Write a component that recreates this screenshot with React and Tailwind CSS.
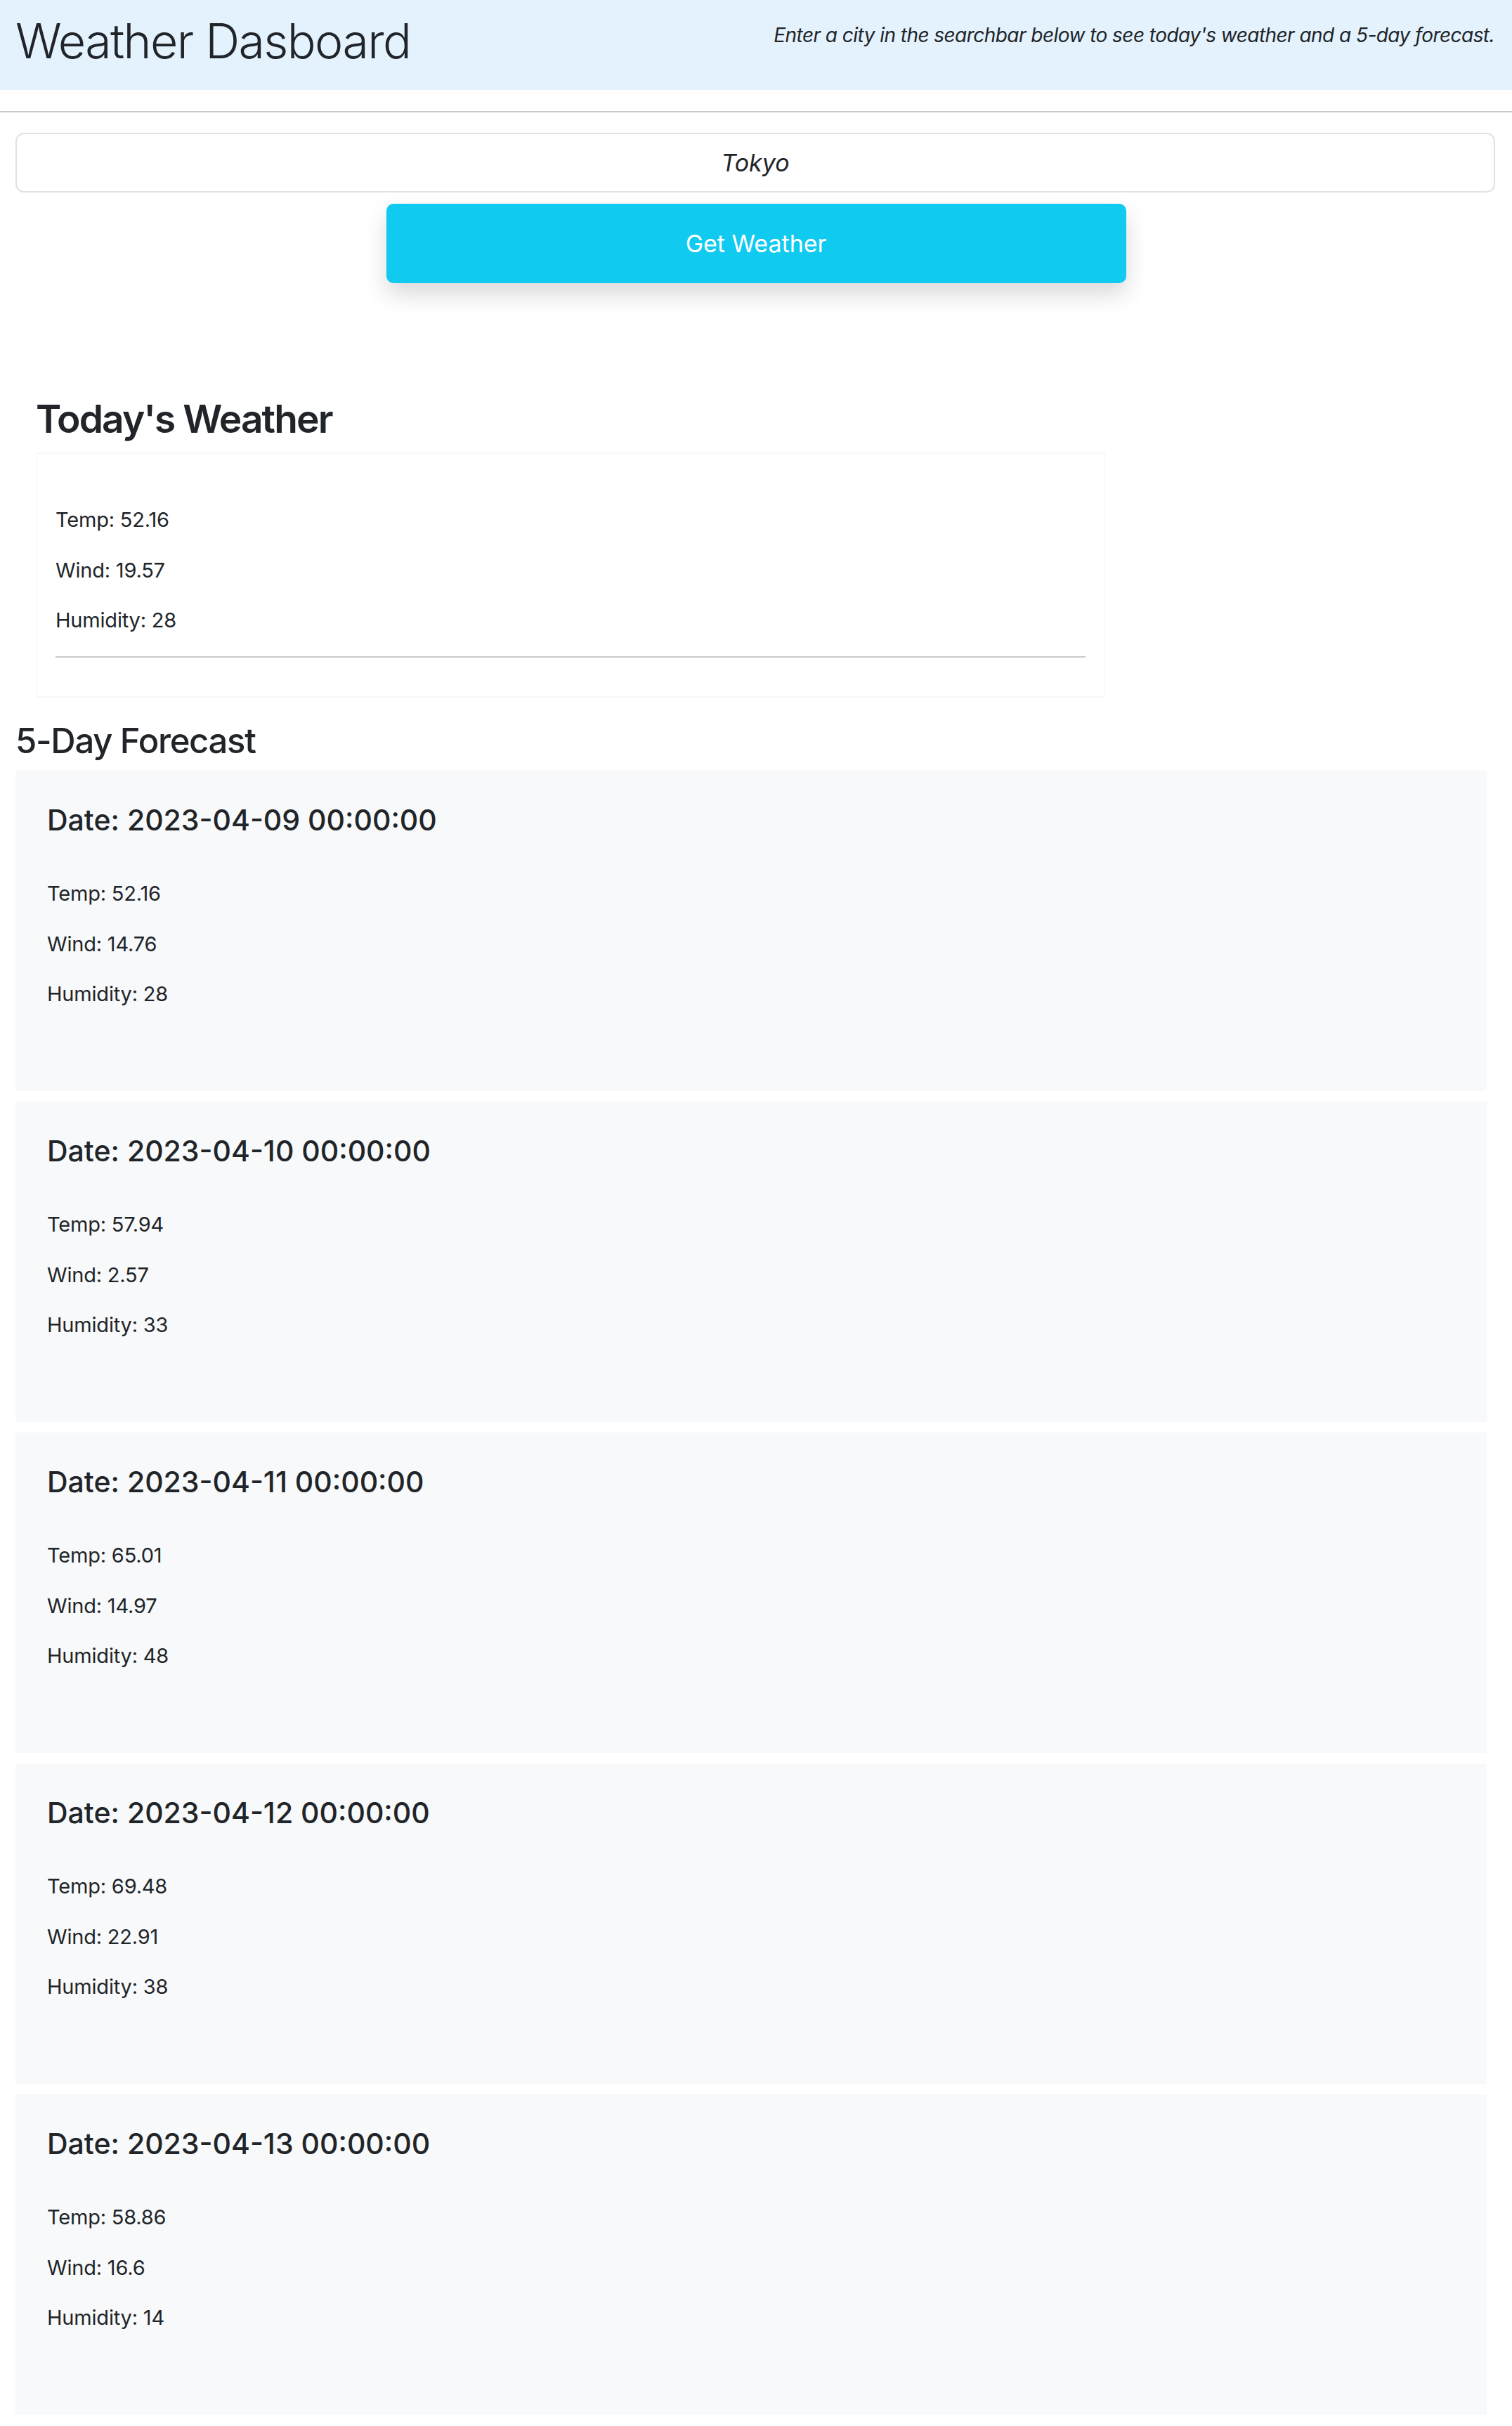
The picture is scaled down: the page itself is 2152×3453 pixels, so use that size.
import React from "react";

const forecast = [
  { date: "2023-04-09 00:00:00", temp: "52.16", wind: "14.76", humidity: "28" },
  { date: "2023-04-10 00:00:00", temp: "57.94", wind: "2.57", humidity: "33" },
  { date: "2023-04-11 00:00:00", temp: "65.01", wind: "14.97", humidity: "48" },
  { date: "2023-04-12 00:00:00", temp: "69.48", wind: "22.91", humidity: "38" },
  { date: "2023-04-13 00:00:00", temp: "58.86", wind: "16.6", humidity: "14" },
];

function Line({ children, last }) {
  return (
    <p className={"text-[29px] leading-[43px] tracking-[-0.2px] " + (last ? "mb-0" : "mb-[28.5px]")}>{children}</p>
  );
}

export default function App() {
  return (
    <div className="min-h-screen bg-white text-[#212529] font-[Inter,'Noto_Sans',sans-serif] pb-[1px]">
      <header className="h-[128px] bg-[#e3f2fd] flex justify-between items-start">
        <h1 className="ml-[22px] mt-[23.5px] text-[68px] leading-[68px] font-light tracking-[-1.6px]">
          Weather Dasboard
        </h1>
        <p className="mr-[25px] mt-[36.2px] text-[28px] leading-[28px] italic tracking-[-0.55px]">
          Enter a city in the searchbar below to see today's weather and a 5-day forecast.
        </p>
      </header>

      <div className="mt-[30px] h-[2px] bg-[#c8c9ca]" />

      <div className="mt-[29px] ml-[22px] w-[2106px]">
        <input
          readOnly
          defaultValue="Tokyo"
          className="w-full h-[85px] border-2 border-[#dee2e6] rounded-[12px] bg-white text-center italic text-[34px] text-[#212529] outline-none"
        />
      </div>

      <div className="flex justify-center mt-[16px]">
        <button className="w-[1053px] h-[113px] bg-[#10caf0] rounded-[10px] text-white text-[34px] shadow-[0_16px_32px_rgba(0,0,0,0.15)]">
          Get Weather
        </button>
      </div>

      <section className="mt-[166px]">
        <h2 className="ml-[51px] mt-[0.5px] text-[55px] leading-[55px] font-semibold tracking-[-1.9px]">Today's Weather</h2>
        <div className="mt-[20px] ml-[51px] w-[1522px] border-2 border-[#f8f8f8] pt-[72px] px-[26px] pb-[55px]">
          <Line>Temp: 52.16</Line>
          <Line>Wind: 19.57</Line>
          <Line last>Humidity: 28</Line>
          <div className="mt-[29.5px] h-[2px] bg-[#c8c9ca]" />
        </div>
      </section>

      <section className="mt-[37px]">
        <h3 className="ml-[22px] text-[49px] leading-[49px] font-medium tracking-[-1.3px]">5-Day Forecast</h3>
        <div className="mt-[18.7px] ml-[22px] w-[2094px] flex flex-col gap-[15px]">
          {forecast.map((d) => (
            <div key={d.date} className="h-[456px] bg-[#f8f9fa] pt-[50px] pl-[45px]">
              <h4 className="text-[41px] leading-[41px] font-medium">Date: {d.date}</h4>
              <div className="mt-[62px]">
                <Line>Temp: {d.temp}</Line>
                <Line>Wind: {d.wind}</Line>
                <Line last>Humidity: {d.humidity}</Line>
              </div>
            </div>
          ))}
        </div>
      </section>
      <div className="h-[14px]" />
    </div>
  );
}
